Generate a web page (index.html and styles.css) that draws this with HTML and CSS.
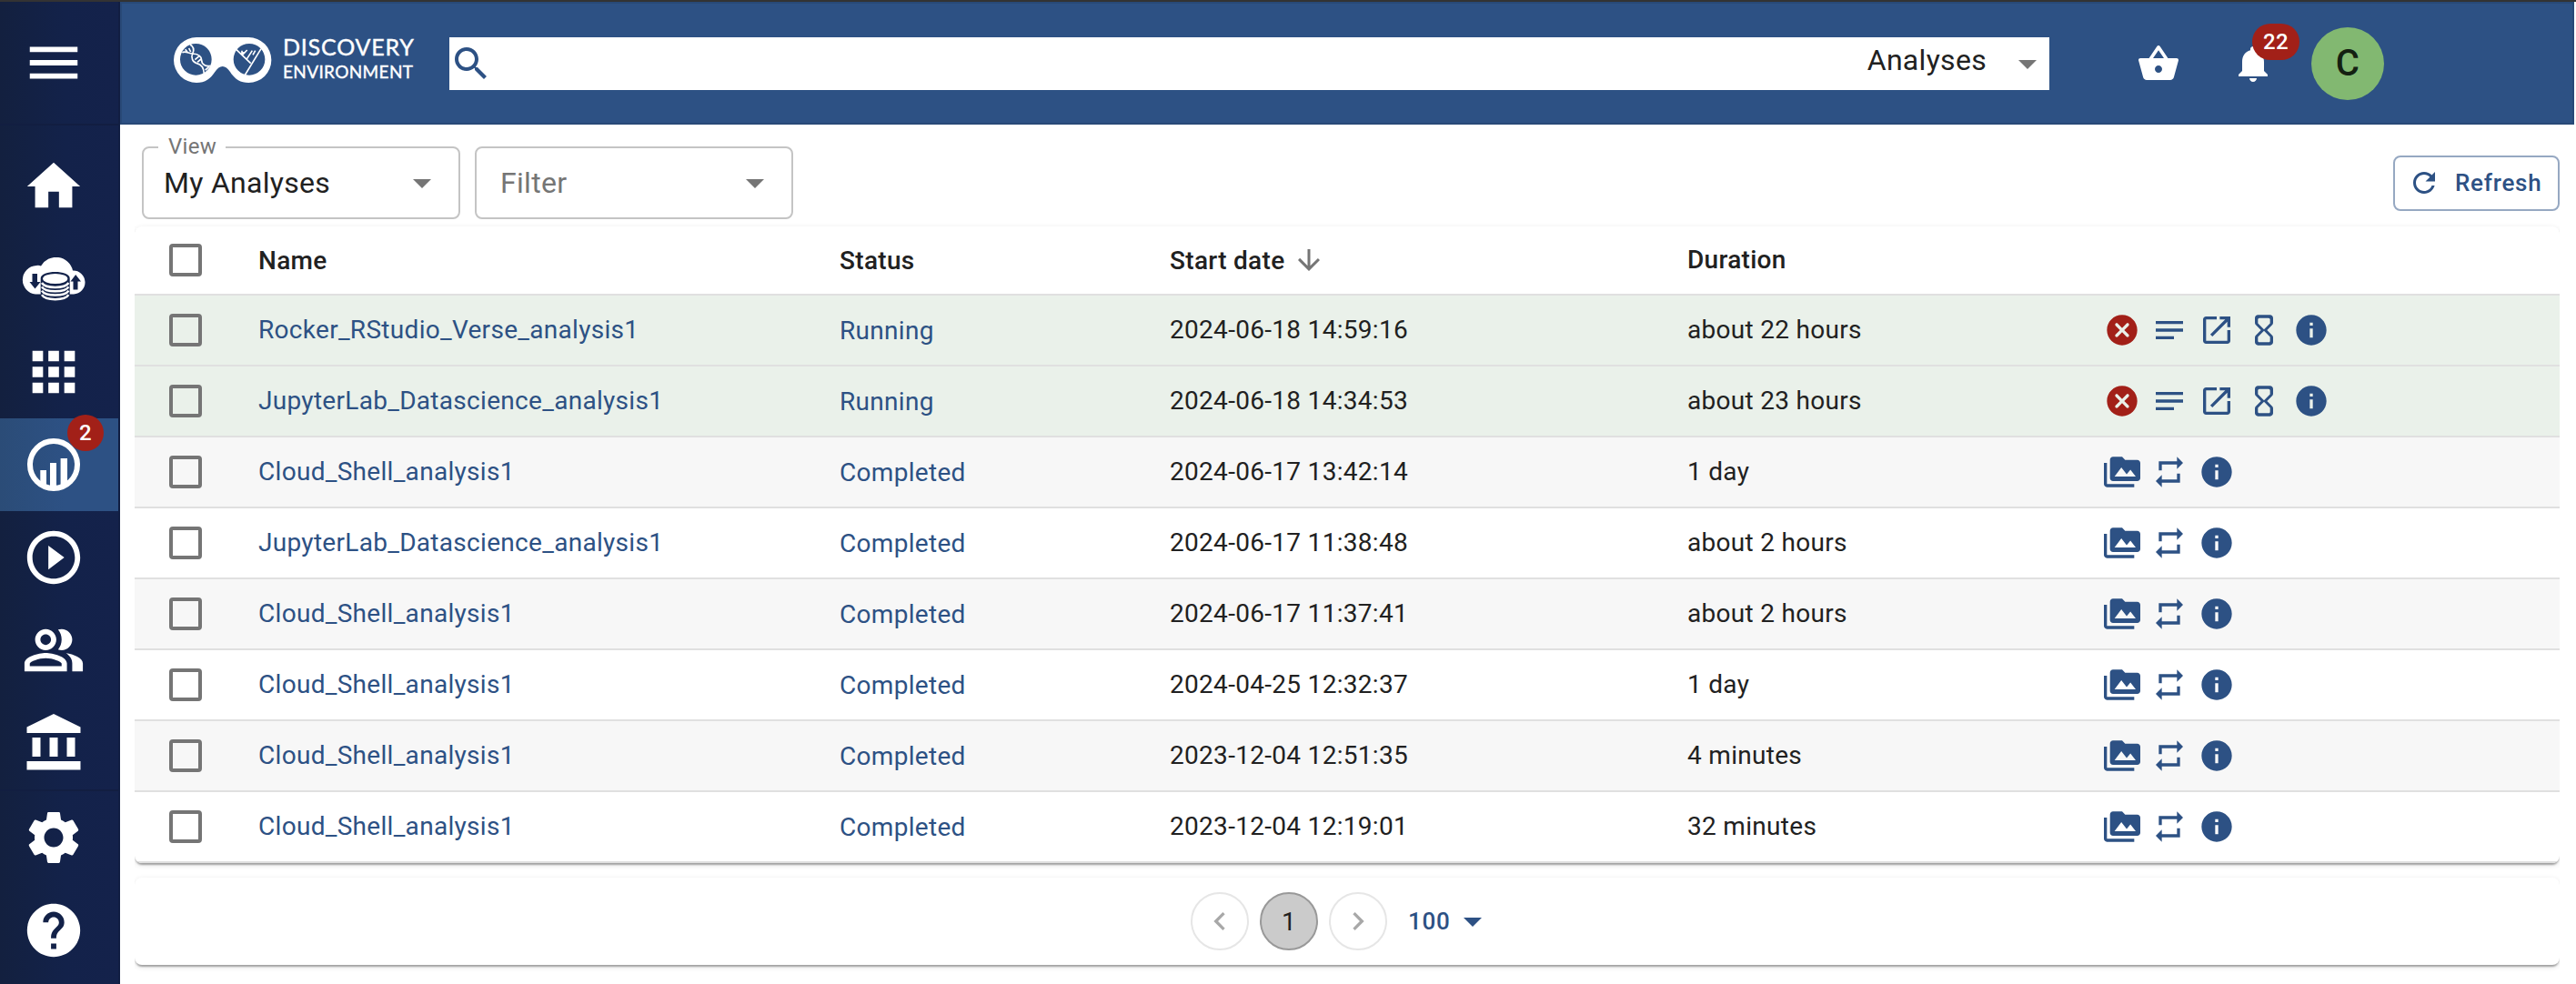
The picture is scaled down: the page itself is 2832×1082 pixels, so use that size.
FILE: index.html
```html
<!DOCTYPE html>
<html lang="en">
<head>
<meta charset="utf-8">
<title>Discovery Environment</title>
<link rel="stylesheet" href="styles.css">
</head>
<body>
<svg class="defs" aria-hidden="true">
  <symbol id="i-terminate" viewBox="0 0 24 24"><path d="M12 2C6.470 2 2 6.470 2 12s4.470 10 10 10 10-4.470 10-10S17.530 2 12 2zm4.300 14.300c-.39.390-1.020.390-1.410 0L12 13.410 9.110 16.300c-.39.390-1.020.390-1.410 0-.39-.39-.39-1.020 0-1.410L10.590 12 7.700 9.110c-.39-.39-.39-1.020 0-1.410.39-.39 1.020-.39 1.410 0L12 10.590l2.890-2.890c.39-.39 1.020-.39 1.410 0 .39.390.39 1.020 0 1.410L13.410 12l2.890 2.890c.38.380.380 1.020 0 1.410z"/></symbol>
  <symbol id="i-logs" viewBox="0 0 24 24"><path d="M3 18h12v-2H3v2zM3 6v2h18V6H3zm0 7h18v-2H3v2z"/></symbol>
  <symbol id="i-launch" viewBox="0 0 24 24"><path d="M19 19H5V5h7V3H5c-1.11 0-2 .9-2 2v14c0 1.1.89 2 2 2h14c1.1 0 2-.9 2-2v-7h-2v7zM14 3v2h3.590l-9.830 9.830 1.410 1.410L19 6.410V10h2V3h-7z"/></symbol>
  <symbol id="i-time" viewBox="0 0 24 24"><path d="M8 2c-1.100 0-2 .9-2 2v3.170c0 .53.210 1.040.590 1.420L10 12l-3.420 3.420c-.37.380-.58.890-.58 1.420V20c0 1.100.9 2 2 2h8c1.100 0 2-.9 2-2v-3.160c0-.53-.21-1.040-.58-1.410L14 12l3.410-3.400c.38-.38.590-.89.590-1.420V4c0-1.100-.9-2-2-2H8zm8 14.500V19c0 .55-.45 1-1 1H9c-.55 0-1-.45-1-1v-2.500l4-4 4 4zm-4-5l-4-4V5c0-.55.450-1 1-1h6c.55 0 1 .450 1 1v2.500l-4 4z"/></symbol>
  <symbol id="i-info" viewBox="0 0 24 24"><path d="M12 2C6.480 2 2 6.480 2 12s4.480 10 10 10 10-4.480 10-10S17.520 2 12 2zm1 15h-2v-6h2v6zm0-8h-2V7h2v2z"/></symbol>
  <symbol id="i-folder" viewBox="0 0 24 24"><path d="M2 6H0v14c0 1.100.9 2 2 2h18v-2H2V6zm20-2h-8l-2-2H6c-1.100 0-1.990.9-1.990 2L4 16c0 1.100.9 2 2 2h16c1.100 0 2-.9 2-2V6c0-1.100-.9-2-2-2zM7 15l4.500-6 3.500 4.510 2.500-3.010L21 15H7z"/></symbol>
  <symbol id="i-relaunch" viewBox="0 0 24 24"><path d="M7 7h10v3l4-4-4-4v3H5v6h2V7zm10 10H7v-3l-4 4 4 4v-3h12v-6h-2v4z"/></symbol>
  <symbol id="i-down" viewBox="0 0 24 24"><path d="M7 10l5 5 5-5z"/></symbol>
</svg>
<div class="window-edge"></div>
<div class="app">
  <nav class="sidebar">
    <a class="nav-toggle"><svg viewBox="0 0 24 24"><path d="M3 18h18v-2H3v2zm0-5h18v-2H3v2zm0-7v2h18V6H3z"/></svg></a>
    <div class="nav-list">
      <a class="nav-item"><svg viewBox="0 0 24 24"><path d="M10 20v-6h4v6h5v-8h3L12 3 2 12h3v8z"/></svg></a>
      <a class="nav-item"><svg class="cloud" viewBox="0 0 70 48">
        <path d="M15 40.500A15.800 15.800 0 0 1 16 9Q19 8.500 21 9.500A19 19 0 0 1 56 14.500A13 13 0 1 1 57 40.500Z"/>
        <path class="cut" d="M11.500 18h5.500v9h3.500l-6 7.500-6-7.500h3zM56.500 35.500h5v-9h3.500l-5.800-7.500-5.700 7.500h3z"/>
        <path class="cut" d="M20.700 23C20.700 13.700 52.700 13.700 52.700 23V42C52.700 49 20.700 49 20.700 42z"/>
        <ellipse cx="36.700" cy="23.500" rx="13.600" ry="5.600"/>
        <path class="disk" d="M22 28q3 5 14.700 5t14.700-5M22 32.300q3 5 14.700 5t14.700-5M22 36.600q3 5 14.700 5t14.700-5M22 41.200q3 5 14.700 5t14.700-5"/>
      </svg></a>
      <a class="nav-item"><svg viewBox="0 0 24 24"><path d="M4 8h4V4H4v4zm6 12h4v-4h-4v4zm-6 0h4v-4H4v4zm0-6h4v-4H4v4zm6 0h4v-4h-4v4zm6-10v4h4V4h-4zm-6 4h4V4h-4v4zm6 6h4v-4h-4v4zm0 6h4v-4h-4v4z"/></svg></a>
      <a class="nav-item selected"><svg viewBox="0 0 70 70"><circle class="ring" cx="35" cy="35" r="26"/><path d="M20.300 41h6.700v17l-6.700-4zM31 33h7v27h-7zM42.600 28h7.400v26l-7.400 4z"/></svg><span class="badge">2</span></a>
      <a class="nav-item"><svg viewBox="0 0 24 24"><path d="M10 16.500l6-4.500-6-4.500v9zM12 2C6.480 2 2 6.480 2 12s4.480 10 10 10 10-4.480 10-10S17.520 2 12 2zm0 18c-4.410 0-8-3.590-8-8s3.590-8 8-8 8 3.590 8 8-3.590 8-8 8z"/></svg></a>
      <a class="nav-item"><svg viewBox="0 0 24 24"><path d="M16.670 13.130C18.040 14.060 19 15.320 19 17v3h4v-3c0-2.180-3.570-3.470-6.330-3.870zM15 12c2.210 0 4-1.790 4-4s-1.790-4-4-4c-.47 0-.91.100-1.330.240C14.500 5.270 15 6.580 15 8s-.5 2.730-1.330 3.760c.42.140.86.240 1.330.240zM9 12c2.210 0 4-1.790 4-4s-1.790-4-4-4-4 1.790-4 4 1.790 4 4 4zm0-6c1.100 0 2 .9 2 2s-.9 2-2 2-2-.9-2-2 .9-2 2-2zm0 7c-2.670 0-8 1.340-8 4v3h16v-3c0-2.660-5.330-4-8-4zm6 5H3v-.99C3.200 16.290 6.300 15 9 15s5.800 1.290 6 2v1z"/></svg></a>
      <a class="nav-item"><svg viewBox="0 0 70 70"><path d="M5.500 17.500L35 3l29.500 14.500V24h-59zM11.500 29h9v21h-9zM30.500 29h9v21h-9zM49.500 29h9v21h-9zM5.500 55h59v9.500h-59z"/></svg></a>
      <hr class="nav-divider">
      <a class="nav-item"><svg viewBox="0 0 24 24"><path d="M19.140 12.940c.04-.3.060-.61.060-.94 0-.32-.02-.64-.07-.94l2.030-1.580c.18-.14.230-.41.120-.61l-1.920-3.320c-.12-.22-.37-.29-.59-.22l-2.390.96c-.5-.38-1.030-.7-1.620-.94l-.36-2.540c-.04-.24-.24-.41-.48-.41h-3.840c-.24 0-.43.170-.47.410l-.36 2.540c-.59.240-1.130.570-1.620.94l-2.390-.96c-.22-.08-.47 0-.59.220L2.740 8.870c-.12.210-.08.470.120.610l2.030 1.580c-.05.300-.09.630-.09.940s.020.640.070.94l-2.030 1.580c-.18.140-.23.410-.12.610l1.920 3.320c.12.220.370.290.590.220l2.390-.96c.5.380 1.030.7 1.620.94l.36 2.540c.05.240.240.410.480.410h3.840c.24 0 .44-.17.470-.41l.36-2.540c.59-.24 1.130-.56 1.620-.94l2.390.96c.22.080.470 0 .59-.22l1.920-3.320c.12-.22.070-.47-.12-.61l-2.010-1.580zM12 15.600c-1.980 0-3.600-1.620-3.600-3.600s1.620-3.600 3.600-3.600 3.600 1.620 3.600 3.600-1.620 3.600-3.600 3.600z"/></svg></a>
      <a class="nav-item"><svg viewBox="0 0 24 24"><path d="M12 2C6.480 2 2 6.480 2 12s4.480 10 10 10 10-4.480 10-10S17.520 2 12 2zm1 17h-2v-2h2v2zm2.070-7.750l-.9.920C13.450 12.900 13 13.500 13 15h-2v-.5c0-1.100.450-2.100 1.170-2.830l1.240-1.260c.37-.36.590-.86.590-1.410 0-1.100-.9-2-2-2s-2 .9-2 2H8c0-2.210 1.790-4 4-4s4 1.790 4 4c0 .88-.36 1.680-.93 2.250z"/></svg></a>
    </div>
  </nav>
  <div class="page">
    <header class="topbar">
      <svg class="logo" viewBox="22 32 324 150">
        <path fill-rule="evenodd" d="M97 32H269A75 75 0 0 1 269 182C240 182 222 168 208 146C200 134 192 128 183 128S166 134 158 146C144 168 126 182 97 182A75 75 0 0 1 97 32zM95 53a52 52 0 1 0 0 104a52 52 0 1 0 0-104zM271 53a52 52 0 1 0 0 104a52 52 0 1 0 0-104z"/>
        <path class="logo-line" d="M76 56C90 64 90 74 84 86C78 98 84 114 98 118C112 121 121 130 122 152M50 82C62 76 72 86 84 86C100 87 114 94 114 108C114 122 128 130 144 126M60 72l8 10M72 68l6 12M92 106l14-12M100 114l12-10M126 140l12-10"/>
        <path class="logo-line" d="M310 70L256 158M228 72L276 118M247 92V76M247 92L264 74M262 105L281 76M283 90L291 76M246 84L258 82"/>
      </svg>
      <div class="wordmark"><span class="w1">DISCOVERY</span><span class="w2">ENVIRONMENT</span></div>
      <div class="search">
        <svg class="search-icon" viewBox="0 0 24 24"><path d="M15.500 14h-.79l-.28-.27C15.410 12.590 16 11.110 16 9.500 16 5.910 13.090 3 9.500 3S3 5.910 3 9.500 5.910 16 9.500 16c1.610 0 3.090-.59 4.230-1.570l.27.280v.79l5 4.990L20.490 19l-4.990-5zm-6 0C7.010 14 5 11.990 5 9.500S7.010 5 9.500 5 14 7.010 14 9.500 11.990 14 9.500 14z"/></svg>
        <span class="search-scope">Analyses</span>
        <svg class="caret"><use href="#i-down"/></svg>
      </div>
      <svg class="basket" viewBox="0 0 24 24"><path d="M17.210 9l-4.380-6.560c-.19-.28-.51-.42-.83-.42-.32 0-.64.140-.83.430L6.790 9H2c-.55 0-1 .45-1 1 0 .09.010.180.040.270l2.540 9.270c.23.840 1 1.460 1.920 1.460h13c.92 0 1.690-.62 1.930-1.460l2.540-9.270L23 10c0-.55-.45-1-1-1h-4.790zM9 9l3-4.400L15 9H9zm3 8c-1.100 0-2-.9-2-2s.9-2 2-2 2 .9 2 2-.9 2-2 2z"/></svg>
      <div class="bell"><svg viewBox="0 0 24 24"><path d="M12 22c1.100 0 2-.9 2-2h-4c0 1.100.890 2 2 2zm6-6v-5c0-3.070-1.640-5.640-4.500-6.320V4c0-.83-.67-1.500-1.500-1.500s-1.500.670-1.500 1.500v.68C7.630 5.360 6 7.920 6 11v5l-2 2v1h16v-1l-2-2z"/></svg><span class="badge">22</span></div>
      <div class="avatar">C</div>
    </header>
    <main class="content">
      <div class="toolbar">
        <fieldset class="select"><legend>View</legend><div class="select-value">My Analyses<svg class="caret"><use href="#i-down"/></svg></div></fieldset>
        <fieldset class="select"><div class="select-value placeholder">Filter<svg class="caret"><use href="#i-down"/></svg></div></fieldset>
        <button class="refresh"><svg viewBox="0 0 24 24"><path d="M17.650 6.350C16.200 4.900 14.210 4 12 4c-4.420 0-7.990 3.580-7.990 8s3.570 8 7.990 8c3.730 0 6.840-2.550 7.730-6h-2.080c-.82 2.330-3.040 4-5.650 4-3.310 0-6-2.690-6-6s2.690-6 6-6c1.660 0 3.140.69 4.220 1.780L13 11h7V4l-2.350 2.350z"/></svg>Refresh</button>
      </div>
      <div class="card table">
        <div class="row head"><i class="check"></i><span>Name</span><span>Status</span><span class="sorted">Start date<svg viewBox="0 0 24 24"><path d="M20 12l-1.410-1.410L13 16.170V4h-2v12.170l-5.580-5.590L4 12l8 8 8-8z"/></svg></span><span class="raised">Duration</span></div>
        <div class="row running"><i class="check"></i><a>Rocker_RStudio_Verse_analysis1</a><a class="status">Running</a><span>2024-06-18 14:59:16</span><span>about 22 hours</span><div class="actions"><svg class="danger"><use href="#i-terminate"/></svg><svg><use href="#i-logs"/></svg><svg><use href="#i-launch"/></svg><svg><use href="#i-time"/></svg><svg><use href="#i-info"/></svg></div></div>
        <div class="row running"><i class="check"></i><a>JupyterLab_Datascience_analysis1</a><a class="status">Running</a><span>2024-06-18 14:34:53</span><span>about 23 hours</span><div class="actions"><svg class="danger"><use href="#i-terminate"/></svg><svg><use href="#i-logs"/></svg><svg><use href="#i-launch"/></svg><svg><use href="#i-time"/></svg><svg><use href="#i-info"/></svg></div></div>
        <div class="row alt"><i class="check"></i><a>Cloud_Shell_analysis1</a><a class="status">Completed</a><span>2024-06-17 13:42:14</span><span>1 day</span><div class="actions"><svg><use href="#i-folder"/></svg><svg><use href="#i-relaunch"/></svg><svg><use href="#i-info"/></svg></div></div>
        <div class="row"><i class="check"></i><a>JupyterLab_Datascience_analysis1</a><a class="status">Completed</a><span>2024-06-17 11:38:48</span><span>about 2 hours</span><div class="actions"><svg><use href="#i-folder"/></svg><svg><use href="#i-relaunch"/></svg><svg><use href="#i-info"/></svg></div></div>
        <div class="row alt"><i class="check"></i><a>Cloud_Shell_analysis1</a><a class="status">Completed</a><span>2024-06-17 11:37:41</span><span>about 2 hours</span><div class="actions"><svg><use href="#i-folder"/></svg><svg><use href="#i-relaunch"/></svg><svg><use href="#i-info"/></svg></div></div>
        <div class="row"><i class="check"></i><a>Cloud_Shell_analysis1</a><a class="status">Completed</a><span>2024-04-25 12:32:37</span><span>1 day</span><div class="actions"><svg><use href="#i-folder"/></svg><svg><use href="#i-relaunch"/></svg><svg><use href="#i-info"/></svg></div></div>
        <div class="row alt"><i class="check"></i><a>Cloud_Shell_analysis1</a><a class="status">Completed</a><span>2023-12-04 12:51:35</span><span>4 minutes</span><div class="actions"><svg><use href="#i-folder"/></svg><svg><use href="#i-relaunch"/></svg><svg><use href="#i-info"/></svg></div></div>
        <div class="row"><i class="check"></i><a>Cloud_Shell_analysis1</a><a class="status">Completed</a><span>2023-12-04 12:19:01</span><span>32 minutes</span><div class="actions"><svg><use href="#i-folder"/></svg><svg><use href="#i-relaunch"/></svg><svg><use href="#i-info"/></svg></div></div>
      </div>
      <div class="card pager">
        <span class="page-btn"><svg viewBox="0 0 24 24"><path d="M15.410 7.410L14 6l-6 6 6 6 1.410-1.410L10.830 12z"/></svg></span>
        <span class="page-btn current">1</span>
        <span class="page-btn"><svg viewBox="0 0 24 24"><path d="M10 6L8.590 7.410 13.170 12l-4.580 4.590L10 18l6-6z"/></svg></span>
        <span class="page-size">100<svg class="caret"><use href="#i-down"/></svg></span>
      </div>
    </main>
  </div>
</div>
</body>
</html>
```
FILE: styles.css
```css
* { box-sizing: border-box; }
body {
  margin: 0;
  height: 1082px;
  overflow: hidden;
  background: #fff;
  color: #212121;
  font-family: Roboto, "Liberation Sans", sans-serif;
  font-size: 28px;
  letter-spacing: 0.3px;
}
svg { display: block; flex: none; fill: currentColor; }
.defs { display: none; }
.window-edge { height: 2px; background: #333; }
.app { display: flex; height: 1080px; }

.sidebar {
  width: 132px;
  flex: none;
  color: #fff;
  background: linear-gradient(90deg, #13203f 0, #13224a 55%, #14224b 100%);
  border-right: 2px solid #111e42;
}
.nav-toggle {
  display: flex;
  height: 136px;
  padding-left: 24px;
  align-items: center;
  border-bottom: 2px solid #121e41;
}
.nav-toggle svg, .nav-item svg { width: 70px; height: 70px; }
.nav-list { padding-top: 16px; }
.nav-item {
  position: relative;
  display: flex;
  height: 102px;
  padding-left: 24px;
  align-items: center;
}
.nav-item.selected { background: linear-gradient(90deg, #2b4c77, #2d5184 55%); }
.nav-item .cloud { height: 48px; }
.cut { fill: #13224a; }
.disk { fill: none; stroke: #fff; stroke-width: 2.5; }
.ring { fill: none; stroke: #fff; stroke-width: 6; }
.nav-divider { margin: 0; height: 2px; border: 0; background: #121e41; }
.badge {
  position: absolute;
  display: flex;
  align-items: center;
  justify-content: center;
  height: 40px;
  min-width: 40px;
  padding: 0 12px;
  border-radius: 20px;
  background: #a22018;
  color: #fff;
  font-size: 24px;
  font-weight: 500;
}
.nav-item .badge { left: 74px; top: -4px; }

.page { flex: 1; min-width: 0; }
.topbar {
  display: flex;
  align-items: center;
  height: 135px;
  margin-right: 2px;
  padding-left: 57px;
  color: #fff;
  background: #2d5184;
  border: 2px solid #284977;
}
.logo { width: 108px; height: 50px; margin-bottom: 7px; }
.logo-line { fill: none; stroke: #fff; stroke-width: 5; }
.wordmark {
  display: flex;
  flex-direction: column;
  width: 144px;
  margin: 0 39px 11px 12px;
  font-family: Lato, sans-serif;
  white-space: nowrap;
}
.w1 { font-size: 25px; line-height: 30px; letter-spacing: 0.8px; -webkit-text-stroke: 0.4px; }
.w2 { font-size: 19px; line-height: 26px; letter-spacing: 0.35px; -webkit-text-stroke: 0.4px; }
.search {
  display: flex;
  align-items: center;
  width: 1759px;
  height: 58px;
  background: #fff;
  color: #212121;
  font-size: 32px;
}
.search-icon { width: 48px; height: 48px; color: #2d5184; }
.search-scope { margin-left: auto; margin-bottom: 7px; }
.caret { width: 48px; height: 48px; color: #757575; }
.search .caret { margin-left: 21px; }
.basket { width: 48px; height: 48px; margin-left: 96px; }
.bell { position: relative; margin-left: 56px; }
.bell svg { width: 48px; height: 48px; }
.bell .badge { left: 23px; top: -20px; }
.avatar {
  display: flex;
  align-items: center;
  justify-content: center;
  width: 80px;
  height: 80px;
  margin-left: 40px;
  border-radius: 50%;
  background: #82b871;
  color: #142011;
  font-size: 40px;
  font-weight: 500;
}

.content { padding: 0 18px 21px 16px; overflow: hidden; }
.toolbar { display: flex; height: 112px; padding: 24px 0 0 8px; }
.select {
  width: 350px;
  height: 80px;
  margin: 0 16px 0 0;
  padding: 0 16px 0 22px;
  border: 2px solid #c4c4c4;
  border-radius: 8px;
  font-size: 32px;
}
.select legend {
  height: 2px;
  margin-left: -6px;
  padding: 0 10px 0 11px;
  font-size: 24px;
  line-height: 0;
  color: #757575;
}
.select-value { display: flex; height: 76px; align-items: center; justify-content: space-between; }
.placeholder { padding-left: 4px; color: #757575; }
.refresh {
  display: flex;
  align-items: center;
  width: 183px;
  height: 61px;
  margin: 10px 0 0 auto;
  padding: 0 0 1px 14px;
  gap: 16px;
  background: #fff;
  border: 2px solid #96a8c2;
  border-radius: 8px;
  color: #2d5184;
  font: 500 26px Roboto, sans-serif;
  letter-spacing: 0.74px;
}
.refresh svg { width: 36px; height: 36px; }

/* The shadow shows above and below a card, never past its sides. */
.card {
  background: #fff;
  border-radius: 8px;
  box-shadow: 0 4px 2px -2px rgba(0,0,0,.2), 0 2px 2px rgba(0,0,0,.14), 0 2px 6px rgba(0,0,0,.12);
  clip-path: inset(-8px 0 -12px 0);
}
.table { overflow: hidden; }
.row {
  display: grid;
  grid-template-columns: 136px 639px 363px 569px 458px 1fr;
  align-items: center;
  height: 78px;
  border-bottom: 2px solid #e0e0e0;
}
.row.head { height: 76px; font-weight: 500; }
.running { background: #eaf1ea; }
.alt { background: #f7f7f7; }
.row a { color: #2d5184; }
.row:not(.head) > span, .row > a:not(.status), .raised { padding-bottom: 2px; }
.check {
  width: 36px;
  height: 36px;
  margin-left: 38px;
  border: 4px solid #757575;
  border-radius: 4px;
}
.sorted { display: flex; align-items: center; }
.sorted svg { width: 36px; height: 36px; margin-left: 9px; color: #757575; }
.actions { display: flex; gap: 12px; color: #2d5184; }
.actions svg { width: 40px; height: 40px; }
.actions .danger { color: #a22018; }

.pager {
  display: flex;
  align-items: center;
  gap: 12px;
  height: 96px;
  margin-top: 16px;
  padding-left: 1161px;
}
.page-btn {
  display: flex;
  align-items: center;
  justify-content: center;
  width: 64px;
  height: 64px;
  border: 2px solid #e6e6e6;
  border-radius: 50%;
  color: #a8a8a8;
}
.page-btn svg { width: 40px; height: 40px; }
.page-btn.current { background: #cbcbcb; border-color: #999; color: #212121; }
.page-size {
  display: flex;
  align-items: center;
  margin: 0 0 1px 11px;
  color: #2d5184;
  font-size: 26px;
  font-weight: 500;
  letter-spacing: 0.74px;
}
.page-size .caret { color: inherit; }
```
